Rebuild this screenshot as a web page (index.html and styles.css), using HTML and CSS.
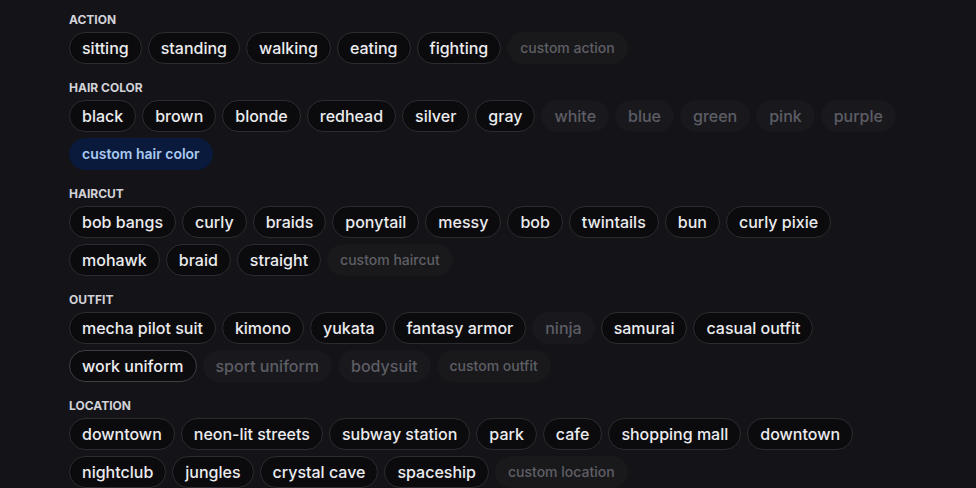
FILE: index.html
```html
<!DOCTYPE html>
<html lang="en">
<head>
<meta charset="utf-8">
<title>Tags</title>
<link rel="stylesheet" href="styles.css">
</head>
<body>
<main class="panel">
  <section class="group">
    <h3 class="label">Action</h3>
    <div class="chips">
      <span class="chip">sitting</span>
      <span class="chip">standing</span>
      <span class="chip">walking</span>
      <span class="chip">eating</span>
      <span class="chip">fighting</span>
      <span class="chip custom">custom action</span>
    </div>
  </section>
  <section class="group">
    <h3 class="label">Hair Color</h3>
    <div class="chips">
      <span class="chip">black</span>
      <span class="chip">brown</span>
      <span class="chip">blonde</span>
      <span class="chip">redhead</span>
      <span class="chip">silver</span>
      <span class="chip">gray</span>
      <span class="chip off">white</span>
      <span class="chip off">blue</span>
      <span class="chip off">green</span>
      <span class="chip off">pink</span>
      <span class="chip off">purple</span>
      <span class="chip custom active">custom hair color</span>
    </div>
  </section>
  <section class="group">
    <h3 class="label">Haircut</h3>
    <div class="chips">
      <span class="chip">bob bangs</span>
      <span class="chip">curly</span>
      <span class="chip">braids</span>
      <span class="chip">ponytail</span>
      <span class="chip">messy</span>
      <span class="chip">bob</span>
      <span class="chip">twintails</span>
      <span class="chip">bun</span>
      <span class="chip">curly pixie</span>
      <span class="chip">mohawk</span>
      <span class="chip">braid</span>
      <span class="chip">straight</span>
      <span class="chip custom">custom haircut</span>
    </div>
  </section>
  <section class="group">
    <h3 class="label">Outfit</h3>
    <div class="chips">
      <span class="chip">mecha pilot suit</span>
      <span class="chip">kimono</span>
      <span class="chip">yukata</span>
      <span class="chip">fantasy armor</span>
      <span class="chip off">ninja</span>
      <span class="chip">samurai</span>
      <span class="chip">casual outfit</span>
      <span class="chip hover">work uniform</span>
      <span class="chip off">sport uniform</span>
      <span class="chip off">bodysuit</span>
      <span class="chip custom">custom outfit</span>
    </div>
  </section>
  <section class="group">
    <h3 class="label">Location</h3>
    <div class="chips">
      <span class="chip">downtown</span>
      <span class="chip">neon-lit streets</span>
      <span class="chip">subway station</span>
      <span class="chip">park</span>
      <span class="chip">cafe</span>
      <span class="chip">shopping mall</span>
      <span class="chip">downtown</span>
      <span class="chip">nightclub</span>
      <span class="chip">jungles</span>
      <span class="chip">crystal cave</span>
      <span class="chip">spaceship</span>
      <span class="chip custom">custom location</span>
    </div>
  </section>
</main>
</body>
</html>
```

FILE: styles.css
```css
html, body {
  margin: 0;
  padding: 0;
  background: #141418;
}
body {
  font-family: Inter, "Noto Sans", "Liberation Sans", sans-serif;
  color: #ececef;
  -webkit-font-smoothing: antialiased;
}
.panel {
  padding: 12px 69px 0 69px;
  display: flex;
  flex-direction: column;
  gap: 16px;
}
.group {
  display: flex;
  flex-direction: column;
  gap: 4px;
}
.label {
  margin: 0;
  font-size: 12px;
  line-height: 16px;
  font-weight: 700;
  text-transform: uppercase;
  color: #d2d2d8;
  letter-spacing: 0;
}
.chips {
  display: flex;
  flex-wrap: wrap;
  gap: 6px;
}
.chip {
  display: inline-flex;
  align-items: center;
  height: 32px;
  box-sizing: border-box;
  padding: 0 12px;
  border: 1px solid #2b2b31;
  border-radius: 999px;
  background: #0b0b0e;
  font-size: 16px;
  font-weight: 500;
  line-height: 24px;
  color: #ececef;
  white-space: nowrap;
}
.chip.hover {
  border-color: #3d3d44;
}
.chip.off {
  background: #19191d;
  border-color: #19191d;
  color: #5d5d65;
}
.chip.custom {
  background: #19191c;
  border-color: #19191c;
  color: #5f5f65;
  font-size: 14px;
  font-weight: 500;
}
.chip.custom.active {
  background: #0a1a3c;
  border-color: #0a1a3c;
  color: #a9cbf2;
  font-weight: 600;
}
```
